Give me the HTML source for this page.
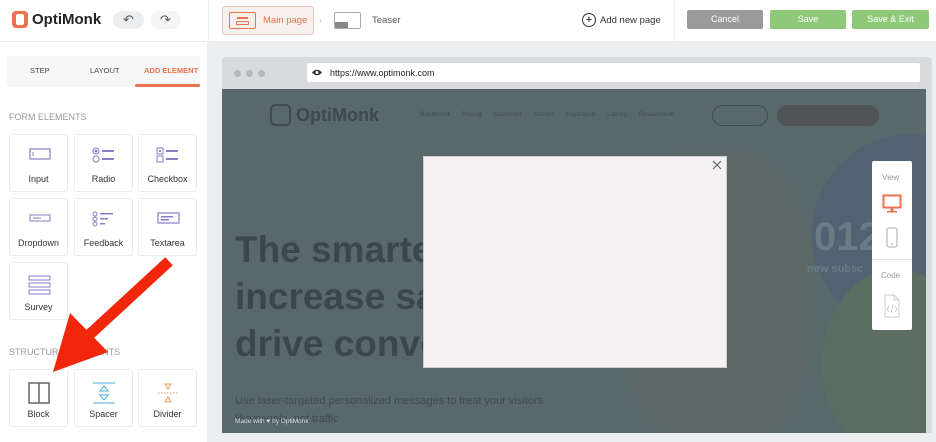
<!DOCTYPE html><html><head><style>
*{box-sizing:border-box;margin:0;padding:0}
body{width:936px;height:442px;overflow:hidden;font-family:"Liberation Sans",sans-serif;background:#eceef0;position:relative}
.a{position:absolute;line-height:1}
.tile{position:absolute;width:59px;height:58px;background:#fff;border:1px solid #ececec;border-radius:3px;font-size:9px;color:#333;text-align:center}
.tile span{position:absolute;left:0;right:0;top:39px}
.tile svg{position:absolute;left:17px;top:12px}
.btn{position:absolute;top:10px;height:19px;border-radius:2px;color:#fff;font-size:9px;text-align:center;line-height:19px}
</style></head><body>
<div class="a" style="left:0;top:0;width:936px;height:42px;background:#fff;border-bottom:1px solid #eee"></div>
<div class="a" style="left:0;top:42px;width:208px;height:400px;background:#fff;border-right:1px solid #eee"></div>
<div class="a" style="left:208px;top:0;width:1px;height:42px;background:#eee"></div>
<div class="a" style="left:674px;top:0;width:1px;height:42px;background:#f0f0f0"></div>
<div class="a" style="left:12px;top:11px;width:16px;height:17px;border-radius:4px;background:#e8734d"></div>
<div class="a" style="left:16px;top:14px;width:8px;height:11px;border-radius:2px;background:#fff"></div>
<div class="a" style="left:32px;top:12px;font-size:15px;font-weight:bold;color:#222">OptiMonk</div>
<div class="a" style="left:113px;top:11px;width:31px;height:18px;border-radius:9px;background:#eceef0;text-align:center;font-size:13px;line-height:18px;color:#555">↶</div>
<div class="a" style="left:150px;top:11px;width:31px;height:18px;border-radius:9px;background:#f4f5f6;text-align:center;font-size:13px;line-height:18px;color:#555">↷</div>
<div class="a" style="left:222px;top:6px;width:92px;height:29px;border:1px solid #efc6b6;border-radius:3px;background:#f6f0ee"></div>
<div class="a" style="left:229px;top:12px;width:27px;height:17px;border:1px solid #e8734d;border-radius:2px"></div>
<div class="a" style="left:237px;top:17px;width:11px;height:2px;background:#e8734d"></div>
<div class="a" style="left:236px;top:21px;width:13px;height:4px;border:1px solid #e8734d;border-radius:1px"></div>
<div class="a" style="left:263px;top:16px;font-size:9.5px;color:#e8734d">Main page</div>
<div class="a" style="left:319px;top:16px;font-size:9px;color:#bbb">›</div>
<div class="a" style="left:334px;top:12px;width:27px;height:17px;border:1px solid #aaa;border-radius:2px"></div>
<div class="a" style="left:335px;top:22px;width:13px;height:6px;background:#888"></div>
<div class="a" style="left:372px;top:16px;font-size:9.5px;color:#555">Teaser</div>
<div class="a" style="left:582px;top:13px;width:14px;height:14px;border:1px solid #333;border-radius:50%;text-align:center;font-size:11px;line-height:12px">+</div>
<div class="a" style="left:600px;top:16px;font-size:9.5px;color:#333">Add new page</div>
<div class="btn" style="left:687px;width:76px;background:#9a9a9a">Cancel</div>
<div class="btn" style="left:770px;width:76px;background:#8ec97a">Save</div>
<div class="btn" style="left:852px;width:77px;background:#8ec97a">Save &amp; Exit</div>
<div class="a" style="left:6px;top:56px;width:194px;height:31px;background:#f7f7f7;border-radius:3px"></div>
<div class="a" style="left:30px;top:67px;font-size:7.5px;color:#444">STEP</div>
<div class="a" style="left:90px;top:67px;font-size:7.5px;color:#444">LAYOUT</div>
<div class="a" style="left:144px;top:67px;font-size:7.5px;color:#e8734d;font-weight:bold">ADD ELEMENT</div>
<div class="a" style="left:135px;top:84px;width:65px;height:3px;background:#e8734d;border-radius:2px"></div>
<div class="a" style="left:9px;top:113px;font-size:9px;color:#999">FORM ELEMENTS</div>
<div class="tile" style="left:9px;top:134px"><svg width="24" height="14"><rect x="3" y="2" width="20" height="10" fill="none" stroke="#8a7cc6" stroke-width="1.2"/><line x1="6" y1="5" x2="6" y2="9" stroke="#8a7cc6"/></svg><span>Input</span></div>
<div class="tile" style="left:74px;top:134px"><svg width="24" height="16"><circle cx="4" cy="4" r="3" fill="none" stroke="#8a7cc6"/><circle cx="4" cy="4" r="1.5" fill="#8a7cc6"/><circle cx="4" cy="12" r="3" fill="none" stroke="#8a7cc6"/><rect x="10" y="3" width="12" height="2" fill="#8a7cc6"/><rect x="10" y="11" width="12" height="2" fill="#8a7cc6"/></svg><span>Radio</span></div>
<div class="tile" style="left:138px;top:134px"><svg width="24" height="16"><rect x="1" y="1" width="6" height="6" fill="none" stroke="#8a7cc6"/><rect x="3" y="3" width="2" height="2" fill="#8a7cc6"/><rect x="1" y="9" width="6" height="6" fill="none" stroke="#8a7cc6"/><rect x="10" y="3" width="12" height="2" fill="#8a7cc6"/><rect x="10" y="11" width="12" height="2" fill="#8a7cc6"/></svg><span>Checkbox</span></div>
<div class="tile" style="left:9px;top:198px"><svg width="24" height="14"><rect x="3" y="4" width="20" height="6" fill="none" stroke="#8a7cc6"/><rect x="6" y="6.5" width="8" height="1" fill="#8a7cc6"/></svg><span>Dropdown</span></div>
<div class="tile" style="left:74px;top:198px"><svg width="24" height="16"><circle cx="3" cy="3" r="2" fill="none" stroke="#8a7cc6"/><circle cx="3" cy="8" r="2" fill="none" stroke="#8a7cc6"/><circle cx="3" cy="13" r="2" fill="none" stroke="#8a7cc6"/><rect x="8" y="2" width="13" height="1.5" fill="#8a7cc6"/><rect x="8" y="7" width="8" height="1.5" fill="#8a7cc6"/><rect x="8" y="12" width="5" height="1.5" fill="#8a7cc6"/></svg><span>Feedback</span></div>
<div class="tile" style="left:138px;top:198px"><svg width="24" height="14"><rect x="2" y="2" width="21" height="10" fill="none" stroke="#8a7cc6" stroke-width="1.2"/><rect x="5" y="5" width="12" height="1.5" fill="#8a7cc6"/><rect x="5" y="8" width="8" height="1.5" fill="#8a7cc6"/></svg><span>Textarea</span></div>
<div class="tile" style="left:9px;top:262px"><svg width="24" height="20"><rect x="2" y="1" width="21" height="4" fill="none" stroke="#8a7cc6"/><rect x="2" y="8" width="21" height="4" fill="none" stroke="#8a7cc6"/><rect x="2" y="15" width="21" height="4" fill="none" stroke="#8a7cc6"/></svg><span>Survey</span></div>
<div class="a" style="left:9px;top:348px;font-size:9px;color:#999">STRUCTURAL ELEMENTS</div>
<div class="tile" style="left:9px;top:369px"><svg width="24" height="22"><rect x="2" y="1" width="20" height="20" fill="none" stroke="#666" stroke-width="1.5"/><line x1="12" y1="1" x2="12" y2="21" stroke="#666" stroke-width="1.5"/></svg><span>Block</span></div>
<div class="tile" style="left:74px;top:369px"><svg width="24" height="22"><line x1="1" y1="1" x2="23" y2="1" stroke="#4aa8e0"/><line x1="1" y1="21" x2="23" y2="21" stroke="#4aa8e0"/><path d="M8 9 L12 4 L16 9Z M8 13 L12 18 L16 13Z" fill="none" stroke="#4aa8e0"/></svg><span>Spacer</span></div>
<div class="tile" style="left:138px;top:369px"><svg width="24" height="22"><path d="M9 2 L15 2 L12 7Z M9 20 L15 20 L12 15Z" fill="none" stroke="#ef9a5a"/><line x1="2" y1="11" x2="22" y2="11" stroke="#ef9a5a" stroke-dasharray="1.5 1.5"/></svg><span>Divider</span></div>
<div class="a" style="left:222px;top:57px;width:710px;height:378px;background:#d8dadd;border-radius:3px"></div>
<div class="a" style="left:234px;top:70px;width:7px;height:7px;border-radius:50%;background:#b5b8bb"></div>
<div class="a" style="left:246px;top:70px;width:7px;height:7px;border-radius:50%;background:#b5b8bb"></div>
<div class="a" style="left:258px;top:70px;width:7px;height:7px;border-radius:50%;background:#b5b8bb"></div>
<div class="a" style="left:307px;top:63px;width:613px;height:19px;background:#fff;border-radius:2px"></div>
<svg class="a" style="left:311px;top:68px" width="12" height="9"><path d="M1 4.5 Q6 -1 11 4.5 Q6 10 1 4.5Z" fill="#333"/><circle cx="6" cy="4.5" r="1.5" fill="#fff"/></svg>
<div class="a" style="left:330px;top:69px;font-size:9px;color:#222">https://www.optimonk.com</div>
<div class="a" style="left:222px;top:89px;width:704px;height:344px;background:#58686b;overflow:hidden">
 <div class="a" style="left:590px;top:45px;width:200px;height:200px;border-radius:50%;background:#536170"></div>
 <div class="a" style="left:600px;top:180px;width:150px;height:190px;border-radius:50%;background:#5c6e62"></div>
 <div class="a" style="left:400px;top:60px;width:190px;height:300px;border-radius:40%;background:#5c6868"></div>
 <div class="a" style="left:48px;top:15px;width:21px;height:22px;border:2px solid #3f4c4f;border-radius:5px"></div>
 <div class="a" style="left:74px;top:17px;font-size:18px;font-weight:bold;color:#3c4a4d">OptiMonk</div>
 <div class="a" style="left:198px;top:23px;font-size:6.5px;color:#3f4c4f;word-spacing:10px">Solutions▾ Pricing Customer&nbsp;Stories Inspiration&nbsp;Library Resources▾</div>
 <div class="a" style="left:490px;top:16px;width:56px;height:21px;border:1.5px solid #3f4c4f;border-radius:11px"></div>
 <div class="a" style="left:555px;top:16px;width:102px;height:21px;background:#4f5456;border-radius:11px"></div>
 <div class="a" style="left:592px;top:128px;font-size:40px;font-weight:bold;color:#6a7b84">012</div>
 <div class="a" style="left:585px;top:175px;font-size:11px;font-weight:bold;color:#6a7b84">new subsc</div>
 <div class="a" style="left:13px;top:137px;font-size:37px;font-weight:bold;color:#3b484b;line-height:47px">The smarte<br>increase sa<br>drive conve</div>
 <div class="a" style="left:13px;top:303px;font-size:11px;color:#3f4c4f;line-height:18px">Use laser-targeted personalized messages to treat your visitors<br>like people, not traffic</div>
 <div class="a" style="left:13px;top:330px;font-size:6.5px;color:#dde">Made with ♥ by OptiMonk</div>
</div>
<div class="a" style="left:208px;top:433px;width:728px;height:9px;background:#eceef0"></div>
<div class="a" style="left:423px;top:156px;width:304px;height:212px;background:#f4f2f3;border:1px solid #ccc"></div>
<svg class="a" style="left:712px;top:160px" width="10" height="10"><path d="M1 1 L9 9 M9 1 L1 9" stroke="#555" stroke-width="1"/></svg>
<div class="a" style="left:872px;top:161px;width:40px;height:169px;background:#fff;border-radius:2px"></div>
<div class="a" style="left:872px;top:259px;width:40px;height:1px;background:#ddd"></div>
<div class="a" style="left:882px;top:174px;font-size:8px;color:#999">View</div>
<svg class="a" style="left:882px;top:194px" width="20" height="20"><rect x="1.5" y="1.5" width="17" height="12" fill="none" stroke="#e8734d" stroke-width="2"/><rect x="8.5" y="14" width="3" height="3" fill="#e8734d"/><rect x="5" y="17" width="10" height="1.5" fill="#e8734d"/></svg>
<svg class="a" style="left:885px;top:227px" width="14" height="22"><rect x="2" y="1" width="10" height="19" rx="2" fill="none" stroke="#bbb" stroke-width="1.3"/><circle cx="7" cy="17" r="1" fill="#bbb"/></svg>
<div class="a" style="left:881px;top:272px;font-size:8px;color:#999">Code</div>
<svg class="a" style="left:884px;top:294px" width="16" height="24"><path d="M1 1 H10 L15 6 V23 H1Z M10 1 V6 H15" fill="none" stroke="#ccc"/><path d="M5 12 L3 15 L5 18 M11 12 L13 15 L11 18 M9 11 L7 19" fill="none" stroke="#ccc"/></svg>
<svg class="a" style="left:0;top:0" width="936" height="442"><line x1="165" y1="265" x2="88" y2="336" stroke="#f2260a" stroke-width="11" stroke-linecap="square"/><path d="M53 372 L70 313 L108 352Z" fill="#f2260a"/></svg>
</body></html>
